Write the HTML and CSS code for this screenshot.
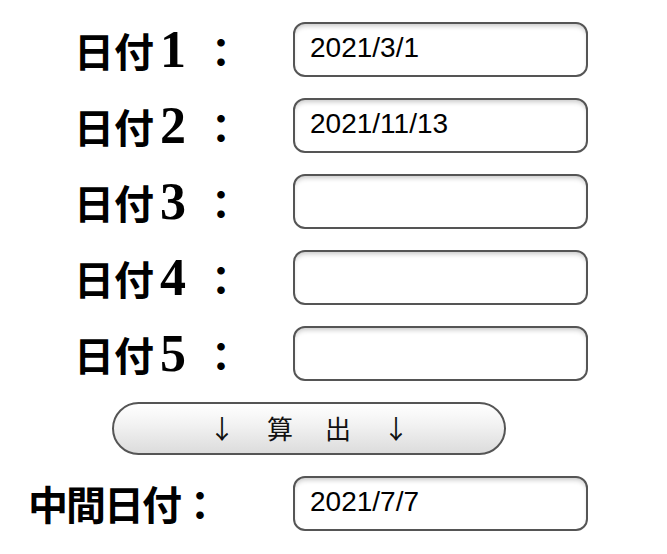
FILE: index.html
```
<!DOCTYPE html>
<html lang="ja">
<head>
<meta charset="utf-8">
<title>中間日付</title>
<link rel="stylesheet" href="styles.css">
</head>
<body>
<div class="form">
  <div class="row"><label class="label">日付<span class="num">1</span>：</label><input class="field" type="text" value="2021/3/1"></div>
  <div class="row"><label class="label">日付<span class="num">2</span>：</label><input class="field" type="text" value="2021/11/13"></div>
  <div class="row"><label class="label">日付<span class="num">3</span>：</label><input class="field" type="text" value=""></div>
  <div class="row"><label class="label">日付<span class="num">4</span>：</label><input class="field" type="text" value=""></div>
  <div class="row"><label class="label">日付<span class="num">5</span>：</label><input class="field" type="text" value=""></div>
  <div class="btn-row"><button class="calc" type="button">↓　算　出　↓</button></div>
  <div class="row"><label class="label label-result">中間日付：</label><input class="field" type="text" value="2021/7/7"></div>
</div>
</body>
</html>
```
FILE: styles.css
```
html, body {
  margin: 0;
  padding: 0;
  background: #ffffff;
}
.form {
  display: flex;
  flex-direction: column;
  gap: 21px;
  padding-top: 22px;
}
.row {
  display: flex;
  align-items: center;
  height: 55px;
}
.label {
  width: 293px;
  box-sizing: border-box;
  padding-left: 74px;
  font-family: "Noto Sans CJK JP", sans-serif;
  font-weight: 700;
  font-size: 40px;
  line-height: 55px;
  color: #000;
  white-space: nowrap;
}
.label-result {
  padding-left: 28px;
  letter-spacing: -2px;
}
.num {
  font-family: "Liberation Serif", serif;
  font-weight: 700;
  font-size: 52px;
  margin: 0 15px 0 6px;
}
.field {
  box-sizing: border-box;
  width: 295px;
  height: 55px;
  margin: 0;
  padding: 0 10px 3px 15px;
  border: 2px solid #555;
  border-radius: 12px;
  background: #fff;
  box-shadow: inset 0 4px 5px -2px rgba(0,0,0,0.22);
  font-family: "Liberation Sans", Arial, sans-serif;
  font-size: 28px;
  color: #000;
  outline: none;
}
.btn-row {
  display: flex;
  height: 53px;
  padding-left: 112px;
}
.calc {
  box-sizing: border-box;
  width: 394px;
  height: 53px;
  margin: 0;
  padding: 0 0 2px 3px;
  border: 2px solid #555;
  border-radius: 27px;
  background: linear-gradient(to bottom, #ffffff 0%, #f1f1f1 45%, #dcdcdc 100%);
  font-family: "Noto Sans CJK JP", sans-serif;
  font-weight: 400;
  font-size: 26px;
  letter-spacing: 3px;
  color: #111;
}
```
